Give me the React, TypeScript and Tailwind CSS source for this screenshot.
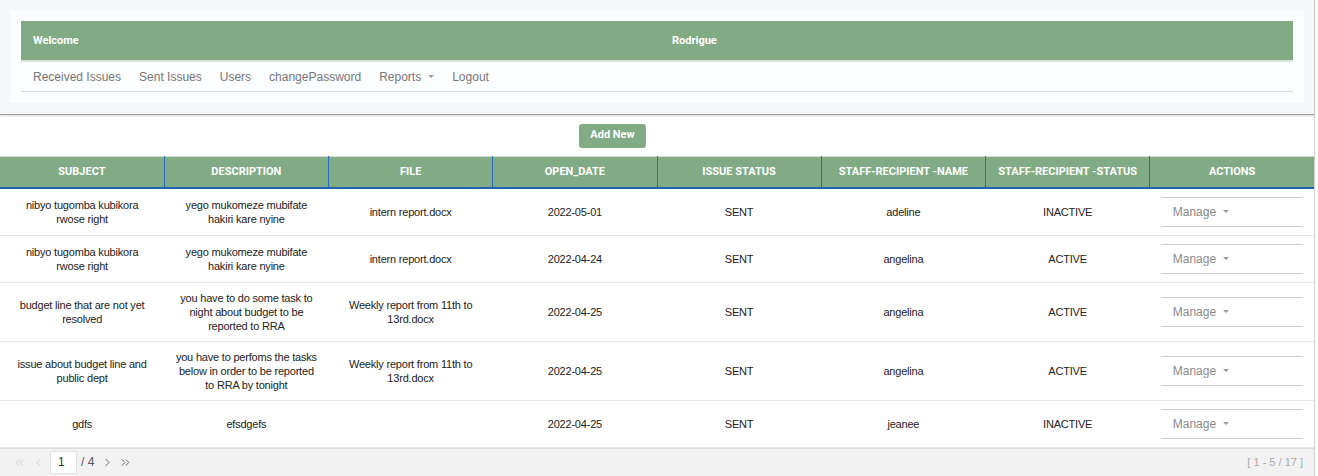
import { ChevronsLeft, ChevronLeft, ChevronRight, ChevronsRight } from 'lucide-react';

type Row = {
  subject: string;
  description: string;
  file: string;
  openDate: string;
  status: string;
  name: string;
  staffStatus: string;
};

const rows: Row[] = [
  {
    subject: 'nibyo tugomba kubikora rwose right',
    description: 'yego mukomeze mubifate hakiri kare nyine',
    file: 'intern report.docx',
    openDate: '2022-05-01',
    status: 'SENT',
    name: 'adeline',
    staffStatus: 'INACTIVE',
  },
  {
    subject: 'nibyo tugomba kubikora rwose right',
    description: 'yego mukomeze mubifate hakiri kare nyine',
    file: 'intern report.docx',
    openDate: '2022-04-24',
    status: 'SENT',
    name: 'angelina',
    staffStatus: 'ACTIVE',
  },
  {
    subject: 'budget line that are not yet resolved',
    description: 'you have to do some task to night about budget to be reported to RRA',
    file: 'Weekly report from 11th to 13rd.docx',
    openDate: '2022-04-25',
    status: 'SENT',
    name: 'angelina',
    staffStatus: 'ACTIVE',
  },
  {
    subject: 'issue about budget line and public dept',
    description: 'you have to perfoms the tasks below in order to be reported to RRA by tonight',
    file: 'Weekly report from 11th to 13rd.docx',
    openDate: '2022-04-25',
    status: 'SENT',
    name: 'angelina',
    staffStatus: 'ACTIVE',
  },
  {
    subject: 'gdfs',
    description: 'efsdgefs',
    file: '',
    openDate: '2022-04-25',
    status: 'SENT',
    name: 'jeanee',
    staffStatus: 'INACTIVE',
  },
];

const headers = [
  'SUBJECT',
  'DESCRIPTION',
  'FILE',
  'OPEN_DATE',
  'ISSUE STATUS',
  'STAFF-RECIPIENT -NAME',
  'STAFF-RECIPIENT -STATUS',
  'ACTIONS',
];

const navLinks = ['Received Issues', 'Sent Issues', 'Users', 'changePassword'];

function Caret() {
  return <span className="ml-[7px] inline-block border-x-[3px] border-t-[3px] border-x-transparent border-t-[#999] align-middle" />;
}

function Cell({ children, wide }: { children: React.ReactNode; wide?: boolean }) {
  return (
    <td
      className={`${wide ? 'px-[10px]' : 'px-[11px]'} py-2 text-center align-middle text-[11px] leading-[14px] tracking-[-0.2px] text-[#222]`}
    >
      {children}
    </td>
  );
}

export default function App() {
  return (
    <div className="h-[476px] w-[1318px] overflow-hidden bg-white font-['Liberation_Sans',Arial,sans-serif]">
      <div className="flex h-full w-[1315px] flex-col border-r border-[#cfcfcf]">
        <header className="h-[115px] border-b border-[#9e9e9e] bg-[#f5f8fb] p-[10px] shadow-[0_1px_2px_rgba(0,0,0,0.15)]">
          <div className="h-[93px] bg-[#fcfdfe] px-[11px] pt-[11px]">
            <div className="grid h-[41px] grid-cols-2 items-center border-b-2 border-[#dbe3db] bg-[#80ab84] font-['Roboto',sans-serif] text-[11px] font-bold text-white">
              <span className="pl-3 pt-px">Welcome</span>
              <span className="pl-[15px] pt-px">Rodrigue</span>
            </div>
            <nav className="flex h-[30px] items-center border-b border-[#dcdcdc] pl-[3px] text-[12px] text-[#777]">
              {navLinks.map((l) => (
                <a key={l} className="px-[9px]">
                  {l}
                </a>
              ))}
              <a className="flex items-center px-[9px]">
                Reports
                <Caret />
              </a>
              <a className="px-[9px]">Logout</a>
            </nav>
          </div>
        </header>

        <div className="flex h-[41px] items-center pl-[579px]">
          <button className="h-[24px] w-[67px] rounded-[3px] bg-[#80ab84] font-['Roboto',sans-serif] text-[11px] font-bold text-white">
            Add New
          </button>
        </div>

        <table className="w-full table-fixed border-collapse border-t border-[#d5dcd5]">
          <thead>
            <tr className="h-[31px] border-b-2 border-[#1f62b1] bg-[#80ab84]">
              {headers.map((h, i) => (
                <th
                  key={h}
                  className={`px-1 pt-px text-center font-['Roboto',sans-serif] text-[11px] font-bold text-white ${
                    i < headers.length - 1 ? 'border-r border-[#2a6bbd]' : ''
                  }`}
                >
                  {h}
                </th>
              ))}
            </tr>
          </thead>
          <tbody>
            {rows.map((r, i) => (
              <tr key={i} className="border-b border-[#e6e6e6]">
                <Cell>{r.subject}</Cell>
                <Cell wide>{r.description}</Cell>
                <Cell>{r.file}</Cell>
                <Cell>{r.openDate}</Cell>
                <Cell>{r.status}</Cell>
                <Cell>{r.name}</Cell>
                <Cell>{r.staffStatus}</Cell>
                <td className="px-[11px] py-2 align-middle">
                  <div className="flex h-[30px] items-center border-y border-[#d0d0d0] pl-3 text-[12px] text-[#8a8a8a]">
                    Manage
                    <Caret />
                  </div>
                </td>
              </tr>
            ))}
          </tbody>
        </table>

        <div className="flex h-[28px] items-center border-t border-[#dddddd] bg-[#f2f2f2] pl-[13px] pr-[11px] text-[11px]">
          <ChevronsLeft className="h-[13px] w-[13px] text-[#c4c4c4]" strokeWidth={1.5} />
          <ChevronLeft className="ml-[6px] h-[13px] w-[13px] text-[#c4c4c4]" strokeWidth={1.5} />
          <input
            readOnly
            value="1"
            className="ml-[5px] h-[23px] w-[27px] border border-[#e2e2e2] bg-white pl-[7px] text-[12px] text-[#333] outline-none"
          />
          <span className="ml-[4px] text-[12px] text-[#555]">/ 4</span>
          <ChevronRight className="ml-[7px] h-[13px] w-[13px] text-[#555]" strokeWidth={1.6} />
          <ChevronsRight className="ml-[5px] h-[13px] w-[13px] text-[#555]" strokeWidth={1.6} />
          <span className="ml-auto text-[#aaa]">[ 1 - 5 / 17 ]</span>
        </div>
      </div>
    </div>
  );
}
